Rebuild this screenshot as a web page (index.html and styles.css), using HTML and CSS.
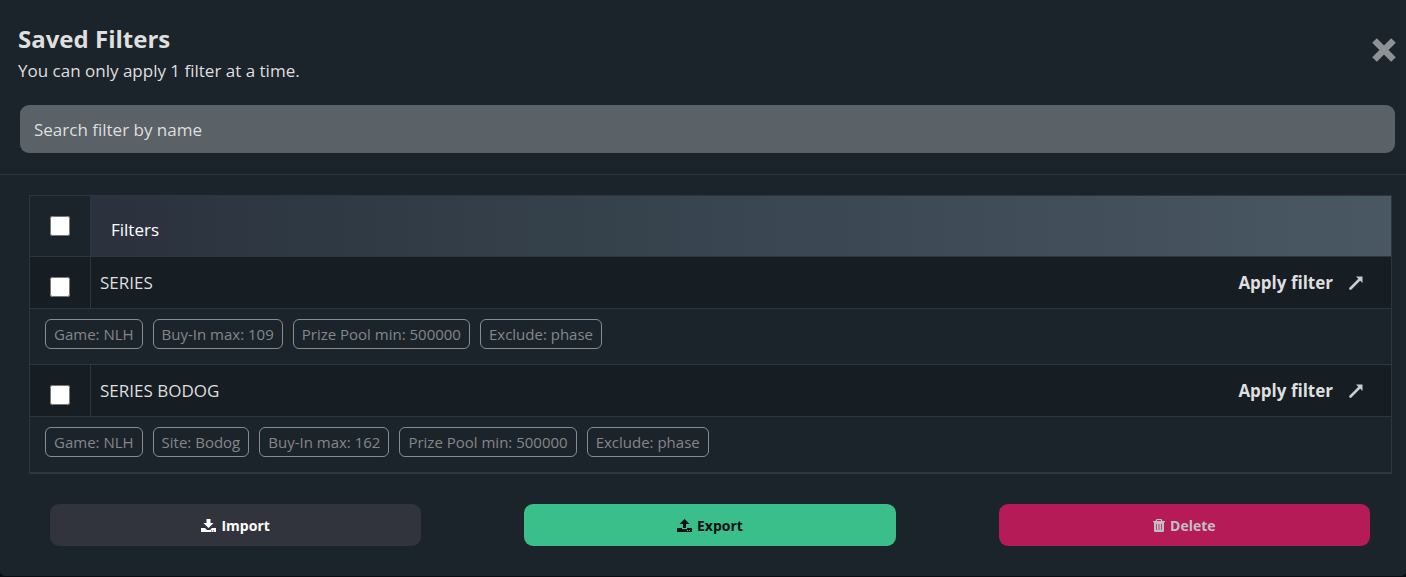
FILE: index.html
```html
<!DOCTYPE html>
<html lang="en">
<head>
    <meta charset="UTF-8">
    <meta name="viewport" content="width=device-width, initial-scale=1.0">
    <title>Saved Filters</title>
    <link rel="stylesheet" href="styles.css">
</head>
<body>
    <div class="modal">
        <header class="modal-header">
            <div class="title-row">
                <div>
                    <h2>Saved Filters</h2>
                    <p>You can only apply 1 filter at a time.</p>
                </div>
                <button type="button" class="close-btn" aria-label="Close">
                    <svg width="26" height="26" viewBox="0 0 26 26"><path d="M3.500 3.500l19 19M22.500 3.500l-19 19" stroke="currentColor" stroke-width="6.500"/></svg>
                </button>
            </div>
            <input type="text" class="search" placeholder="Search filter by name" aria-label="Search filter by name">
        </header>

        <main class="modal-body">
            <table class="filters">
                <thead>
                    <tr>
                        <th class="check"><input type="checkbox" aria-label="Select all filters"></th>
                        <th class="heading">Filters</th>
                    </tr>
                </thead>
                <tbody>
                    <tr class="filter-row">
                        <td class="check"><input type="checkbox" id="filter-1"></td>
                        <td>
                            <div class="filter-name">
                                <label for="filter-1">SERIES</label>
                                <button type="button" class="apply-btn">Apply filter
                                    <svg width="14" height="14" viewBox="0 0 14 14"><path d="M1.500 12.500L10 4" stroke="currentColor" stroke-width="2.600" stroke-linecap="round"/><path d="M7 .5h6.500V7z" fill="currentColor"/></svg>
                                </button>
                            </div>
                        </td>
                    </tr>
                    <tr>
                        <td colspan="2">
                            <div class="tags">
                                <span class="tag">Game: NLH</span>
                                <span class="tag">Buy-In max: 109</span>
                                <span class="tag">Prize Pool min: 500000</span>
                                <span class="tag">Exclude: phase</span>
                            </div>
                        </td>
                    </tr>
                    <tr class="filter-row">
                        <td class="check"><input type="checkbox" id="filter-2"></td>
                        <td>
                            <div class="filter-name">
                                <label for="filter-2">SERIES BODOG</label>
                                <button type="button" class="apply-btn">Apply filter
                                    <svg width="14" height="14" viewBox="0 0 14 14"><path d="M1.500 12.500L10 4" stroke="currentColor" stroke-width="2.600" stroke-linecap="round"/><path d="M7 .5h6.500V7z" fill="currentColor"/></svg>
                                </button>
                            </div>
                        </td>
                    </tr>
                    <tr>
                        <td colspan="2">
                            <div class="tags">
                                <span class="tag">Game: NLH</span>
                                <span class="tag">Site: Bodog</span>
                                <span class="tag">Buy-In max: 162</span>
                                <span class="tag">Prize Pool min: 500000</span>
                                <span class="tag">Exclude: phase</span>
                            </div>
                        </td>
                    </tr>
                </tbody>
            </table>
        </main>

        <footer class="actions">
            <button type="button" class="btn import">
                <svg width="15" height="14" viewBox="0 0 15 14" fill="currentColor"><path d="M5.500 0h4v4h3l-5 5-5-5h3z"/><path fill-rule="evenodd" d="M0 9h4l2 2h3l2-2h4v4H0zM10 11.500v1h1v-1zM12 11.500v1h1v-1z"/></svg>
                Import
            </button>
            <button type="button" class="btn export">
                <svg width="15" height="14" viewBox="0 0 15 14" fill="currentColor"><path d="M6 9h3V5h3.500l-5-5-5 5H6z"/><path fill-rule="evenodd" d="M0 9h5v1.300h5V9h5v4H0zM10 11v1h1v-1zM12 11v1h1v-1z"/></svg>
                Export
            </button>
            <button type="button" class="btn delete">
                <svg width="12" height="14" viewBox="0 0 12 14" fill="currentColor"><path fill-rule="evenodd" d="M3.500 0h5l1 2H12v1.300H0V2h2.500zM4.300 1L4 2h4l-.3-1z"/><path fill-rule="evenodd" d="M1 3h10v8.500q0 1.500-1.300 1.500H2.300Q1 13 1 11.500zM3.300 5v6h.7V5zM5.650 5v6h.7V5zM8 5v6h.7V5z"/></svg>
                Delete
            </button>
        </footer>
    </div>
</body>
</html>
```
FILE: styles.css
```css
* {
    box-sizing: border-box;
}
body {
    margin: 0;
    background-color: #0b0c10;
    color: #dfdfdf;
    font-family: "Open Sans", "Noto Sans", sans-serif;
    font-size: 17px;
    line-height: 24px;
}
button, input {
    font: inherit;
}
.modal {
    background-color: #1c242b;
    border-radius: 0 0 5px 5px;
}
.modal-header {
    padding: 23px 11px 21px 18px;
    border-bottom: 1px solid #2d3540;
}
.title-row {
    display: flex;
    justify-content: space-between;
    align-items: center;
}
h2 {
    margin: 0;
    font-size: 24px;
    font-weight: bold;
    line-height: 32px;
}
p {
    margin: 4px 0 0;
}
.close-btn {
    display: flex;
    margin: 0 -2px 6px 0;
    padding: 0;
    border: none;
    background: none;
    color: #8e9294;
    cursor: pointer;
}
.search {
    display: block;
    width: calc(100% - 2px);
    height: 48px;
    margin: 22px 0 0 2px;
    padding: 0 14px;
    border: none;
    border-radius: 9px;
    background-color: #5a6167;
    color: #dfdfdf;
}
.search::placeholder {
    color: #dfdfdf;
    opacity: 1;
}
.modal-body {
    padding: 20px 14px 0 29px;
}
.filters {
    width: 100%;
    border-collapse: separate;
    border-spacing: 0;
    border: 1px solid #2d3540;
}
.filters th, .filters td {
    padding: 0;
    border-bottom: 1px solid #2d3540;
    font-weight: normal;
    text-align: left;
}
.filters .check {
    width: 61px;
    border-right: 1px solid #2d3540;
    text-align: center;
}
.check input {
    display: block;
    width: 20px;
    height: 20px;
    margin: 0 auto;
}
.filters .heading {
    height: 61px;
    padding: 8px 20px 0;
    background: linear-gradient(90deg, #2b313d, #2f3a44 20%, #4a5864);
    color: #fff;
}
.filter-row {
    height: 52px;
    background-color: #161d23;
}
.filter-row .check {
    padding-top: 8px;
}
.filter-name {
    display: flex;
    justify-content: space-between;
    padding: 0 28px 0 9px;
}
.apply-btn {
    display: flex;
    align-items: center;
    gap: 16px;
    padding: 0;
    border: none;
    background: none;
    color: #dfdfdf;
    font-weight: bold;
    cursor: pointer;
}
.apply-btn svg {
    color: #c8ccd6;
}
.tags {
    display: flex;
    flex-wrap: wrap;
    gap: 10px;
    padding: 10px 15px 15px;
}
.tag {
    padding: 0 8px;
    border: 1px solid #8a8b8d;
    border-radius: 6px;
    color: #858688;
    font-size: 15px;
    line-height: 28px;
}
.actions {
    display: grid;
    grid-template-columns: repeat(3, 1fr);
    column-gap: 103px;
    padding: 30px 36px 30px 50px;
}
.btn {
    display: flex;
    justify-content: center;
    align-items: center;
    gap: 5px;
    height: 42px;
    padding: 2px 6px 0;
    border: none;
    border-radius: 9px;
    font-size: 14px;
    font-weight: bold;
    cursor: pointer;
}
.import {
    background-color: #31343c;
    color: #fff;
}
.export {
    background-color: #3bbf8a;
    color: #0b1015;
}
.delete {
    background-color: #b51b56;
    color: #c0c0c4;
}
```
